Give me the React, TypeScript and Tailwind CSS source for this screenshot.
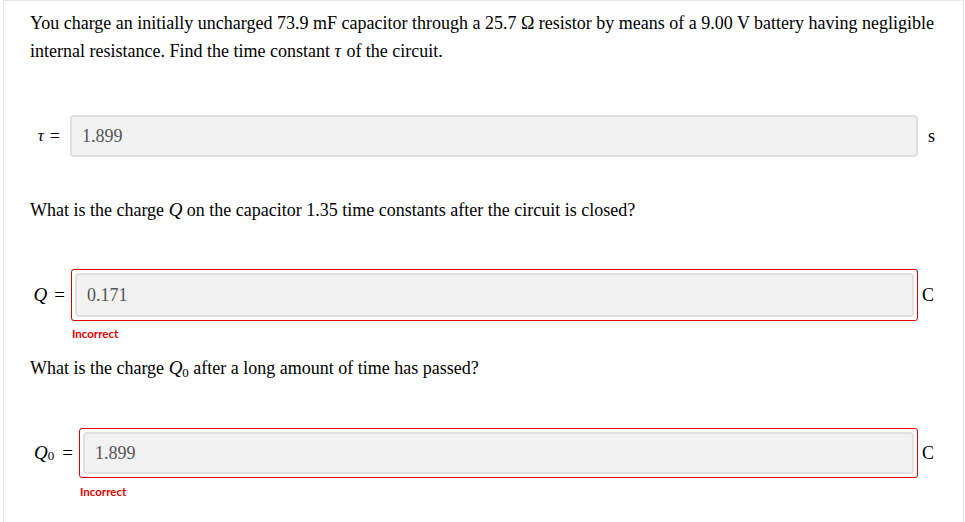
import React from "react";

const serif = { fontFamily: '"Liberation Serif", "Times New Roman", serif' };
const sans = { fontFamily: 'Lato, "Open Sans", sans-serif' };

function InputBox({ value, h }: { value: string; h: string }) {
  return (
    <div
      className={`flex-1 ${h} flex items-center rounded-[4px] border-2 border-[#e0e0e0] bg-[#f2f2f2] pl-[10px] text-[18px] text-[#555]`}
    >
      {value}
    </div>
  );
}

export default function App() {
  return (
    <div className="w-[965px] h-[522px] bg-white overflow-hidden" style={serif}>
      <div className="ml-[3px] w-[961px] h-[522px] border-l border-r border-t border-[#e6e6e6] pl-[26px] pr-[22px] pt-[8px] text-black">
        <p className="text-[18px] leading-[28px]">
          You charge an initially uncharged 73.9 mF capacitor through a 25.7 Ω resistor by means of a 9.00 V battery
          having negligible internal resistance. Find the time constant{" "}
          <i className="inline-block pr-[1px]">τ</i> of the circuit.
        </p>

        {/* tau row */}
        <div className="mt-[50px] flex items-center">
          <div className="w-[40px] flex items-center justify-end pr-[10px]">
            <i className="text-[17px]">τ</i>
            <span className="ml-[6px] text-[18px]">=</span>
          </div>
          <div className="flex-1 h-[42px] flex items-center rounded-[4px] border-2 border-[#e0e0e0] bg-[#f2f2f2] pl-[10px] text-[18px] text-[#555]">
            1.899
          </div>
          <div className="w-[23px] pl-[10px] text-[18px] leading-none">s</div>
        </div>

        <p className="mt-[39px] text-[18px] leading-[28px]">
          What is the charge <i className="text-[19px]">Q</i> on the capacitor 1.35 time constants after the circuit is
          closed?
        </p>

        {/* Q row */}
        <div className="mt-[45px] flex items-center">
          <div className="w-[41px] flex items-center justify-end pr-[6px]">
            <i className="text-[19px]">Q</i>
            <span className="ml-[7px] text-[19px]">=</span>
          </div>
          <div className="flex-1 rounded-[3px] border border-[#e00000] p-[3px] flex">
            <InputBox value="0.171" h="h-[44px]" />
          </div>
          <div className="w-[23px] pl-[4px] text-[18px]">C</div>
        </div>
        <div className="mt-[6px] ml-[42px] text-[11.5px] leading-[14px] font-bold text-[#e00000]" style={sans}>
          Incorrect
        </div>

        <p className="mt-[13px] text-[18px] leading-[28px]">
          What is the charge{" "}
          <span>
            <i className="text-[19px]">Q</i>
            <span className="text-[13px] relative top-[3px]">0</span>
          </span>{" "}
          after a long amount of time has passed?
        </p>

        {/* Q0 row */}
        <div className="mt-[44px] flex items-center">
          <div className="w-[49px] flex items-center justify-end pr-[6px]">
            <i className="text-[19px]">Q</i>
            <span className="text-[13px] relative top-[3px]">0</span>
            <span className="ml-[8px] text-[19px]">=</span>
          </div>
          <div className="flex-1 rounded-[3px] border border-[#e00000] p-[3px] flex">
            <InputBox value="1.899" h="h-[42px]" />
          </div>
          <div className="w-[23px] pl-[4px] text-[18px]">C</div>
        </div>
        <div className="mt-[7px] ml-[50px] text-[11.5px] leading-[14px] font-bold text-[#e00000]" style={sans}>
          Incorrect
        </div>
      </div>
    </div>
  );
}
